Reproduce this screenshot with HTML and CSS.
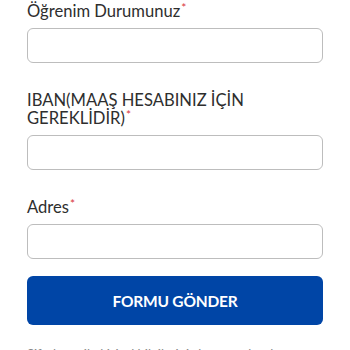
FILE: index.html
```html
<!DOCTYPE html>
<html lang="tr">
<head>
<meta charset="utf-8">
<link rel="stylesheet" href="styles.css">
</head>
<body>
<form class="form">
  <div class="field">
    <label class="label">Öğrenim Durumunuz<span class="req">*</span></label>
    <input class="input" type="text">
  </div>
  <div class="field">
    <label class="label">IBAN(MAAŞ HESABINIZ İÇİN GEREKLİDİR)<span class="req">*</span></label>
    <input class="input" type="text">
  </div>
  <div class="field">
    <label class="label">Adres<span class="req">*</span></label>
    <input class="input" type="text">
  </div>
  <button class="submit" type="button">FORMU GÖNDER</button>
  <p class="note">Şifreleme ile kişisel bilgileriniz korunmaktadır.</p>
</form>
</body>
</html>
```
FILE: styles.css
```css
html, body {
  margin: 0;
  padding: 0;
  background: #fff;
}
body {
  font-family: Lato, "Noto Sans", sans-serif;
  color: #333;
}
.form {
  width: 296px;
  margin: 0 0 0 27px;
  padding-top: 1px;
  display: flex;
  flex-direction: column;
}
.field {
  display: flex;
  flex-direction: column;
  gap: 8px;
  margin-bottom: 27px;
}
.field:last-of-type {
  margin-bottom: 17px;
}
.label {
  font-size: 16.6px;
  line-height: 18px;
  padding-top: 1px;
  color: #2e2e2e;
}
.req {
  color: #d9363e;
  font-size: 12px;
  line-height: 0;
  vertical-align: 5px;
  margin-left: 1px;
}
.input {
  box-sizing: border-box;
  height: 35px;
  width: 100%;
  border: 1px solid #bdbdbd;
  border-radius: 6px;
  background: #fff;
  margin: 0;
}
.submit {
  height: 49px;
  width: 100%;
  border: 0;
  border-radius: 6px;
  background: #0045a6;
  color: #fff;
  font-family: Lato, "Noto Sans", sans-serif;
  font-weight: 700;
  font-size: 15.5px;
  letter-spacing: -0.2px;
  margin: 0;
}
.note {
  margin: 21px 0 0;
  font-size: 13px;
  color: #888;
}
```
